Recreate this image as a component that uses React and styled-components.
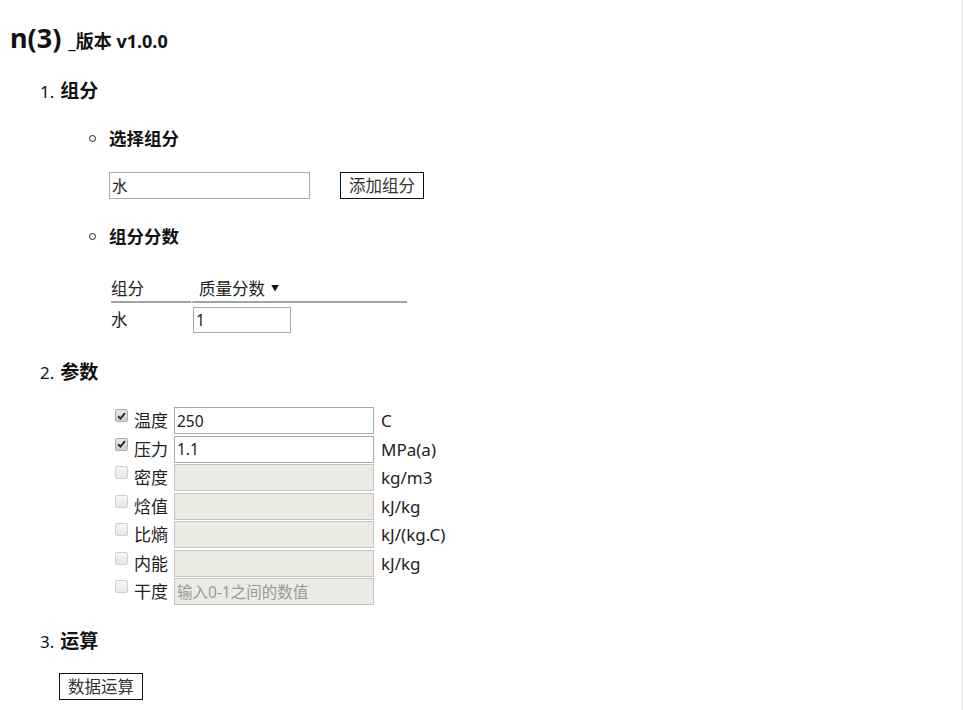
import styled, { createGlobalStyle } from "styled-components";

const Global = createGlobalStyle`
    body {
        margin: 0;
        background: #fff;
        font-family: "Noto Sans", "Noto Sans CJK SC", sans-serif;
        color: #111;
    }
`;

const Page = styled.div`
    display: flex;
    min-height: 100vh;
`;

const Main = styled.main`
    flex: 1;
    padding: 24px 10px 0 10px;
`;

const ScrollEdge = styled.div`
    width: 2px;
    background: #efefef;
`;

const Title = styled.h1`
    margin: 0;
    display: flex;
    align-items: baseline;
    gap: 7px;
    font-size: 27px;
    line-height: 28px;
    font-weight: 700;
`;

const Version = styled.span`
    font-size: 18px;
`;

const SectionHead = styled.div`
    display: flex;
    align-items: baseline;
    gap: 6px;
    margin-top: ${(p) => p.$top}px;
    padding-left: 30px;
    line-height: 24px;
`;

const Num = styled.span`
    font-size: 17px;
`;

const HeadText = styled.strong`
    font-size: 19px;
    font-weight: 700;
`;

const SubHead = styled.div`
    display: flex;
    align-items: center;
    margin-top: ${(p) => p.$top}px;
    padding-left: 79px;
    font-size: 17.5px;
    font-weight: 700;
    line-height: 24px;
`;

const Bullet = styled.span`
    width: 5px;
    height: 5px;
    border: 1px solid #222;
    border-radius: 50%;
    margin-right: 13px;
`;

const Row = styled.div`
    display: flex;
    align-items: center;
    gap: 30px;
    margin-top: ${(p) => p.$top || 22}px;
    padding-left: ${(p) => p.$indent || 99}px;
`;

const TextInput = styled.input`
    box-sizing: border-box;
    width: ${(p) => p.$w}px;
    height: ${(p) => p.$h || 27}px;
    padding: 0 2px;
    border: 1px solid #a9a9a9;
    background: #fff;
    font-family: "Noto Sans", "Noto Sans CJK SC", sans-serif;
    font-size: 15.5px;
    color: #222;
    outline: none;
    &:disabled {
        background: #ebebe4;
        border-color: #c4c4c4;
    }
    &::placeholder {
        color: #9a9a9a;
    }
`;

const Button = styled.button`
    box-sizing: border-box;
    width: 84px;
    height: 27px;
    padding: 0;
    border: 1px solid #111;
    background: #fff;
    font-family: "Noto Sans", "Noto Sans CJK SC", sans-serif;
    font-size: 16.5px;
    color: #333;
    line-height: 25px;
`;

const FractionTable = styled.table`
    margin: 28px 0 0 101px;
    border-collapse: separate;
    border-spacing: 0;
    font-size: 16.5px;
    color: #222;
`;

const Th = styled.th`
    width: ${(p) => p.$w}px;
    height: 24px;
    padding: 0 0 0 ${(p) => p.$pad || 0}px;
    text-align: left;
    font-weight: 400;
    line-height: 24px;
    border-bottom: 2px solid #a3a3a3;
    & + & {
        border-left: 2px solid #fff;
    }
`;

const Td = styled.td`
    padding: 4px 0 0 0;
    line-height: 26px;
    & + & {
        padding-left: 2px;
    }
`;

const Arrow = styled.span`
    font-size: 8px;
    margin-left: 6px;
    vertical-align: 4px;
    color: #111;
`;

const ParamGrid = styled.div`
    display: grid;
    grid-template-columns: 19px 40px 200px auto;
    grid-auto-rows: 27px;
    row-gap: 1.5px;
    margin-top: 22px;
    padding-left: 105px;
    font-size: 17px;
    color: #222;
    align-items: center;
`;

const CheckBox = styled.span`
    align-self: start;
    margin-top: 2px;
    box-sizing: border-box;
    width: 13px;
    height: 13px;
    border: 1px solid ${(p) => (p.$on ? "#ababab" : "#d0d0d0")};
    border-radius: 2px;
    background: ${(p) =>
        p.$on
            ? "linear-gradient(#e8e8e8, #cfcfcf)"
            : "linear-gradient(#f6f6f6, #e6e6e6)"};
    display: flex;
    align-items: center;
    justify-content: center;
`;

const Label = styled.span`
    line-height: 25px;
`;

const Unit = styled.span`
    padding-left: 7px;
    line-height: 25px;
`;

const params = [
    { name: "温度", value: "250", unit: "C", on: true },
    { name: "压力", value: "1.1", unit: "MPa(a)", on: true },
    { name: "密度", unit: "kg/m3" },
    { name: "焓值", unit: "kJ/kg" },
    { name: "比熵", unit: "kJ/(kg.C)" },
    { name: "内能", unit: "kJ/kg" },
    { name: "干度", unit: "", placeholder: "输入0-1之间的数值" },
];

const Tick = () => (
    <svg width="9" height="8" viewBox="0 0 9 8">
        <path d="M1 4.2 L3.4 6.5 L8 1.2" fill="none" stroke="#2a2a2a" strokeWidth="1.9" />
    </svg>
);

const App = () => {
    return (
        <Page>
            <Global />
            <Main>
                <Title>
                    n(3)
                    <Version>_版本 v1.0.0</Version>
                </Title>

                <SectionHead $top={24}>
                    <Num>1.</Num>
                    <HeadText>组分</HeadText>
                </SectionHead>

                <SubHead $top={22}>
                    <Bullet />
                    选择组分
                </SubHead>
                <Row>
                    <TextInput $w={201} defaultValue="水" />
                    <Button>添加组分</Button>
                </Row>

                <SubHead $top={25}>
                    <Bullet />
                    组分分数
                </SubHead>
                <FractionTable>
                    <thead>
                        <tr>
                            <Th $w={80}>组分</Th>
                            <Th $w={208} $pad={6}>
                                质量分数<Arrow>▼</Arrow>
                            </Th>
                        </tr>
                    </thead>
                    <tbody>
                        <tr>
                            <Td>水</Td>
                            <Td>
                                <TextInput $w={98} $h={26} defaultValue="1" />
                            </Td>
                        </tr>
                    </tbody>
                </FractionTable>

                <SectionHead $top={27}>
                    <Num>2.</Num>
                    <HeadText>参数</HeadText>
                </SectionHead>
                <ParamGrid>
                    {params.map((p) => (
                        <>
                            <CheckBox key={p.name + "c"} $on={p.on}>
                                {p.on ? <Tick /> : null}
                            </CheckBox>
                            <Label key={p.name + "l"}>{p.name}</Label>
                            <TextInput
                                key={p.name + "i"}
                                $w={200}
                                disabled={!p.on}
                                defaultValue={p.value}
                                placeholder={p.placeholder}
                            />
                            <Unit key={p.name + "u"}>{p.unit}</Unit>
                        </>
                    ))}
                </ParamGrid>

                <SectionHead $top={24}>
                    <Num>3.</Num>
                    <HeadText>运算</HeadText>
                </SectionHead>
                <Row $top={19} $indent={49}>
                    <Button>数据运算</Button>
                </Row>
            </Main>
            <ScrollEdge />
        </Page>
    );
};

export default App;
